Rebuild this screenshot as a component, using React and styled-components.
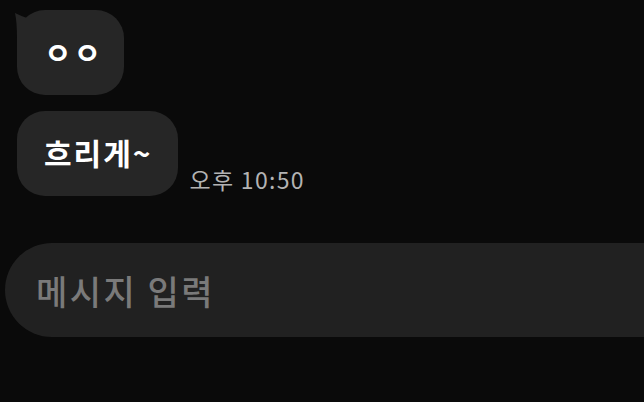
import React from 'react';
import styled, { createGlobalStyle } from 'styled-components';

const GlobalStyle = createGlobalStyle`
  html, body {
    margin: 0;
    padding: 0;
    background: #0a0a0a;
    overflow: hidden;
  }
  body {
    font-family: "Noto Sans CJK KR", "Noto Sans", sans-serif;
  }
`;

const Screen = styled.div`
  width: 644px;
  height: 402px;
  background: #0a0a0a;
  display: flex;
  flex-direction: column;
  padding-top: 10px;
  box-sizing: border-box;
  overflow: hidden;
`;

const Messages = styled.div`
  display: flex;
  flex-direction: column;
  gap: 16px;
  padding-left: 17px;
`;

const Row = styled.div`
  display: flex;
  align-items: flex-end;
  gap: 12px;
`;

const Bubble = styled.div`
  position: relative;
  height: 85px;
  box-sizing: border-box;
  padding: 0 ${p => p.$padRight || 27}px 4px 27px;
  display: flex;
  align-items: center;
  background: #262626;
  color: #ffffff;
  border-radius: 28px;
  font-size: 30px;
  font-weight: 600;
  letter-spacing: 2px;
`;

const Tail = styled.svg`
  position: absolute;
  left: -4px;
  top: 0;
  width: 16px;
  height: 28px;
`;

const Time = styled.span`
  color: #b3b3b3;
  font-size: 23px;
  line-height: 1;
  margin-bottom: 5px;
  letter-spacing: 1.3px;
`;

const InputBar = styled.div`
  margin-top: 47px;
  margin-left: 5px;
  width: 700px;
  height: 94px;
  background: #212121;
  border-radius: 47px;
  display: flex;
  align-items: center;
  padding-left: 31px;
  box-sizing: border-box;
`;

const Placeholder = styled.span`
  color: #7a7a7a;
  font-size: 34px;
  font-weight: 500;
  letter-spacing: 2.5px;
`;

export default function App() {
  return (
    <>
      <GlobalStyle />
      <Screen>
        <Messages>
          <Row>
            <Bubble $padRight={21}>
              <Tail viewBox="0 0 16 28">
                <path d="M2 3 Q8 6 14 8 L14 28 L4 28 Q4 12 2 3 Z" fill="#262626" />
              </Tail>
              ㅇㅇ
            </Bubble>
          </Row>
          <Row>
            <Bubble $padRight={25}>흐리게~</Bubble>
            <Time>오후 10:50</Time>
          </Row>
        </Messages>
        <InputBar>
          <Placeholder>메시지 입력</Placeholder>
        </InputBar>
      </Screen>
    </>
  );
}
